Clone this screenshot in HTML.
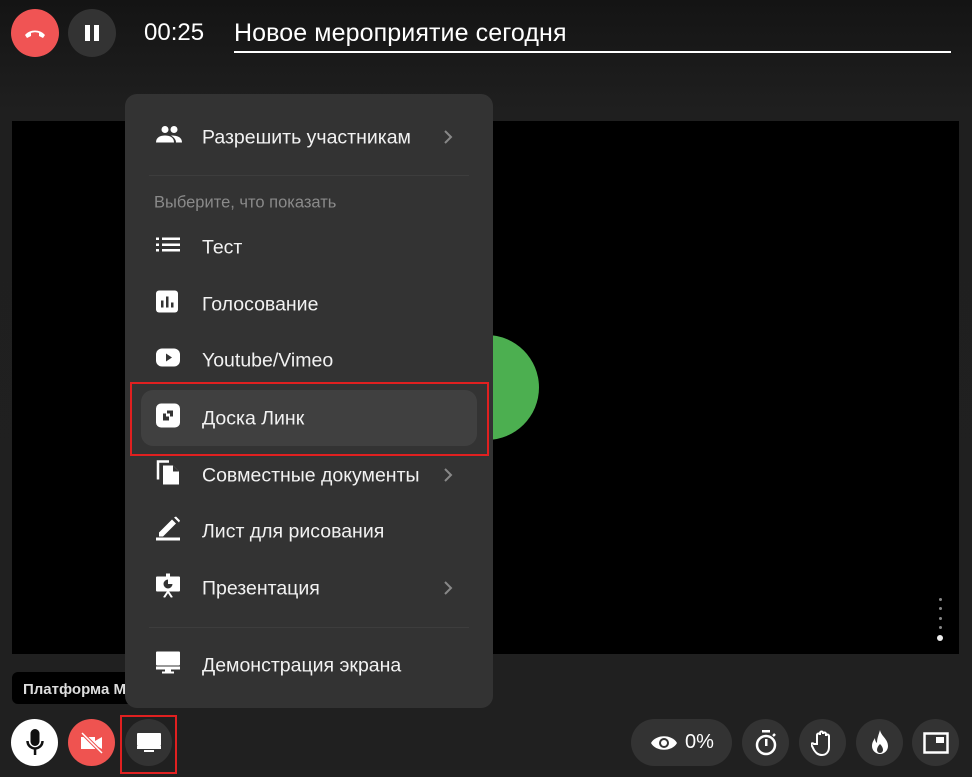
<!DOCTYPE html>
<html><head><meta charset="utf-8"><style>
*{margin:0;padding:0;box-sizing:border-box}
body{width:972px;height:777px;overflow:hidden;background:linear-gradient(#141414 0,#1f1f1f 110px,#202020 100%);font-family:"Liberation Sans",sans-serif;color:#fff;position:relative}
.a{position:absolute}
.circ{position:absolute;border-radius:50%;display:flex;align-items:center;justify-content:center}
.menu{position:absolute;left:125px;top:94px;width:368px;height:614px;background:#333;border-radius:12px}
.it{position:absolute;left:77px;font-size:19.5px;color:#f2f2f2;transform:translateY(-50%);white-space:nowrap;margin-top:1px}
.ic{position:absolute;left:31px;transform:translateY(-50%)}
.chev{position:absolute;left:318px;transform:translateY(-50%)}
.div{position:absolute;left:24px;right:24px;height:1px;background:#3d3d3d}
</style></head><body>
<div class="circ" style="left:11px;top:9px;width:48px;height:48px;background:#f05454">
<svg width="24" height="12" viewBox="0 0 24 12"><path d="M2 8c5-6 15-6 20 0l-2 3-4-2v-3c-3-1-5-1-8 0v3l-4 2z" fill="#fff"/></svg></div>
<div class="circ" style="left:68px;top:9px;width:48px;height:48px;background:#333">
<svg width="14" height="16"><rect x="0" y="0" width="5" height="16" fill="#fff"/><rect x="9" y="0" width="5" height="16" fill="#fff"/></svg></div>
<div class="a" style="left:144px;top:19px;font-size:24px">00:25</div>
<div class="a" style="left:234px;top:19px;font-size:25px;letter-spacing:0.1px">Новое мероприятие сегодня</div>
<div class="a" style="left:234px;top:51px;width:717px;height:2px;background:#fff"></div>

<div class="a" style="left:12px;top:121px;width:947px;height:533px;background:#000"></div>
<div class="a" style="left:434px;top:335px;width:105px;height:105px;border-radius:50%;background:#4caf50"></div>
<div class="a" style="left:939px;top:598px;width:3px;height:3px;border-radius:50%;background:#888"></div>
<div class="a" style="left:939px;top:607px;width:3px;height:3px;border-radius:50%;background:#888"></div>
<div class="a" style="left:939px;top:617px;width:3px;height:3px;border-radius:50%;background:#888"></div>
<div class="a" style="left:939px;top:626px;width:3px;height:3px;border-radius:50%;background:#888"></div>
<div class="a" style="left:937px;top:635px;width:6px;height:6px;border-radius:50%;background:#eee"></div>

<div class="a" style="left:12px;top:672px;width:130px;height:32px;background:#000;border-radius:6px;font-size:15px;font-weight:bold;color:#ddd;padding:9px 0 0 11px;overflow:hidden;white-space:nowrap">Платформа М</div>

<div class="menu">
<div class="ic" style="top:43px"><svg width="26" height="18" viewBox="0 0 26 18"><circle cx="9" cy="4" r="3.5" fill="#fff"/><circle cx="18" cy="4" r="3.5" fill="#fff"/><path d="M0 17c0-5 4-7 9-7s9 2 9 7z" fill="#fff"/><path d="M15 10c5 0 11 1 11 7h-6c0-3-2-5-5-7z" fill="#fff"/></svg></div>
<div class="it" style="top:43px">Разрешить участникам</div>
<svg class="chev" style="top:43px" width="10" height="14"><path d="M2 1l6 6-6 6" stroke="#888" stroke-width="2" fill="none"/></svg>
<div class="div" style="top:81px"></div>
<div class="it" style="top:108px;left:29px;font-size:16.5px;color:#8a8a8a">Выберите, что показать</div>

<div class="ic" style="top:153px"><svg width="24" height="14"><rect x="0" y="0" width="3" height="2.5" fill="#fff"/><rect x="6" y="0" width="18" height="2.5" fill="#fff"/><rect x="0" y="6" width="3" height="2.5" fill="#fff"/><rect x="6" y="6" width="18" height="2.5" fill="#fff"/><rect x="0" y="11.5" width="3" height="2.5" fill="#fff"/><rect x="6" y="11.5" width="18" height="2.5" fill="#fff"/></svg></div>
<div class="it" style="top:153px">Тест</div>

<div class="ic" style="top:210px"><svg width="22" height="22"><rect width="22" height="22" rx="3" fill="#fff"/><rect x="5" y="10" width="2.5" height="7" fill="#333"/><rect x="10" y="6" width="2.5" height="11" fill="#333"/><rect x="15" y="12" width="2.5" height="5" fill="#333"/></svg></div>
<div class="it" style="top:210px">Голосование</div>

<div class="ic" style="top:266px"><svg width="24" height="18"><rect width="24" height="18" rx="6" fill="#fff"/><path d="M10 5l6 4-6 4z" fill="#333"/></svg></div>
<div class="it" style="top:266px">Youtube/Vimeo</div>

<div class="a" style="left:16px;top:296px;width:336px;height:56px;background:#404040;border-radius:12px"></div>
<div class="ic" style="top:324px"><svg width="24" height="24"><rect width="24" height="24" rx="5" fill="#fff"/><path d="M7 10v7h6v-4h-3v-3z" fill="#333"/><path d="M11 7h6v6h-3v-3h-3z" fill="#333"/></svg></div>
<div class="it" style="top:324px">Доска Линк</div>

<div class="ic" style="top:381px"><svg width="24" height="26"><path d="M2 20V2h11" stroke="#fff" stroke-width="2.5" fill="none"/><path d="M7 6h10l6 6v13H7z" fill="#fff"/><path d="M17 6v6h6" fill="#333"/></svg></div>
<div class="it" style="top:381px">Совместные документы</div>
<svg class="chev" style="top:381px" width="10" height="14"><path d="M2 1l6 6-6 6" stroke="#888" stroke-width="2" fill="none"/></svg>

<div class="ic" style="top:437px"><svg width="24" height="26"><path d="M3 17l13-13 4 4-13 13H3z" fill="#fff"/><path d="M18 2l2-1 4 4-1 2z" fill="#fff"/><rect x="0" y="22" width="24" height="3" fill="#fff"/></svg></div>
<div class="it" style="top:437px">Лист для рисования</div>

<div class="ic" style="top:494px"><svg width="24" height="24"><rect x="10" y="0" width="4" height="3" fill="#fff"/><rect x="0" y="3" width="24" height="15" rx="1" fill="#fff"/><path d="M12 6a4.5 4.5 0 1 0 4.5 4.5H12z" fill="#333"/><path d="M8 24l4-6 4 6" stroke="#fff" stroke-width="2" fill="none"/></svg></div>
<div class="it" style="top:494px">Презентация</div>
<svg class="chev" style="top:494px" width="10" height="14"><path d="M2 1l6 6-6 6" stroke="#888" stroke-width="2" fill="none"/></svg>
<div class="div" style="top:533px"></div>

<div class="ic" style="top:571px"><svg width="24" height="22"><rect width="24" height="14" rx="1" fill="#fff"/><rect x="0" y="15" width="24" height="3" fill="#fff"/><rect x="9" y="18" width="6" height="2" fill="#fff"/><rect x="6" y="20" width="12" height="2" fill="#fff"/></svg></div>
<div class="it" style="top:571px">Демонстрация экрана</div>
</div>

<div class="a" style="left:130px;top:382px;width:359px;height:74px;border:2px solid #e02020"></div>

<div class="circ" style="left:11px;top:719px;width:47px;height:47px;background:#fff">
<svg width="18" height="28"><rect x="4.5" y="0" width="9" height="17" rx="4.5" fill="#111"/><path d="M1.5 12a7.5 7.5 0 0 0 15 0" stroke="#111" stroke-width="2.5" fill="none"/><rect x="7.8" y="19" width="2.5" height="7" fill="#111"/></svg></div>
<div class="circ" style="left:68px;top:719px;width:47px;height:47px;background:#ef5350">
<svg width="24" height="24"><path d="M1 6h14v12H1z" fill="#fff"/><path d="M15 10l7-4v12l-7-4z" fill="#fff"/><path d="M2 2l20 20" stroke="#ef5350" stroke-width="3.5"/><path d="M2 2l20 20" stroke="#fff" stroke-width="1.5"/></svg></div>
<div class="circ" style="left:125px;top:719px;width:47px;height:47px;background:#333">
<svg width="24" height="20"><rect width="24" height="13" rx="1" fill="#fff"/><rect y="13" width="24" height="3" fill="#fff"/><rect x="7" y="17" width="10" height="2" fill="#fff"/></svg></div>
<div class="a" style="left:120px;top:715px;width:57px;height:59px;border:2px solid #e02020"></div>

<div class="a" style="left:631px;top:719px;width:101px;height:47px;border-radius:24px;background:#333"></div>
<svg class="a" style="left:650px;top:734px" width="28" height="18"><path d="M1 9C6 0 22 0 27 9 22 18 6 18 1 9z" fill="#fff"/><circle cx="14" cy="9" r="5" fill="#333"/><circle cx="14" cy="9" r="3" fill="#fff"/></svg>
<div class="a" style="left:685px;top:731px;font-size:20px">0%</div>
<div class="circ" style="left:742px;top:719px;width:47px;height:47px;background:#333">
<svg width="24" height="26"><rect x="8" y="0" width="8" height="2.5" fill="#fff"/><circle cx="12" cy="15" r="9" stroke="#fff" stroke-width="2.5" fill="none"/><rect x="11" y="9" width="2.5" height="7" fill="#fff"/><path d="M19 6l2-2" stroke="#fff" stroke-width="2.5"/></svg></div>
<div class="circ" style="left:799px;top:719px;width:47px;height:47px;background:#333">
<svg width="24" height="28"><path d="M6 15V6a1.5 1.5 0 0 1 3 0V4a1.5 1.5 0 0 1 3 0v1a1.5 1.5 0 0 1 3 0v2a1.5 1.5 0 0 1 3 0v11c0 5-3 8-7 8s-6-2-8-5l-3-6c1-1 2-1 3 0z" stroke="#fff" stroke-width="2" fill="none"/></svg></div>
<div class="circ" style="left:856px;top:719px;width:47px;height:47px;background:#333">
<svg width="18" height="26"><path d="M9 0c1 6 8 9 8 16a8 8 0 0 1-16 0c0-4 2-6 3-8 0 3 1 4 2 5 0-5 2-9 3-13z" fill="#fff"/><path d="M9 14c-2 2-3 4-3 6a3 3 0 0 0 6 0c0-2-1-4-3-6z" fill="#333"/></svg></div>
<div class="circ" style="left:912px;top:719px;width:47px;height:47px;background:#333">
<svg width="26" height="22"><rect x="1.5" y="1.5" width="23" height="19" stroke="#fff" stroke-width="2.5" fill="none"/><rect x="13" y="5" width="8" height="6" fill="#fff"/></svg></div>
</body></html>
